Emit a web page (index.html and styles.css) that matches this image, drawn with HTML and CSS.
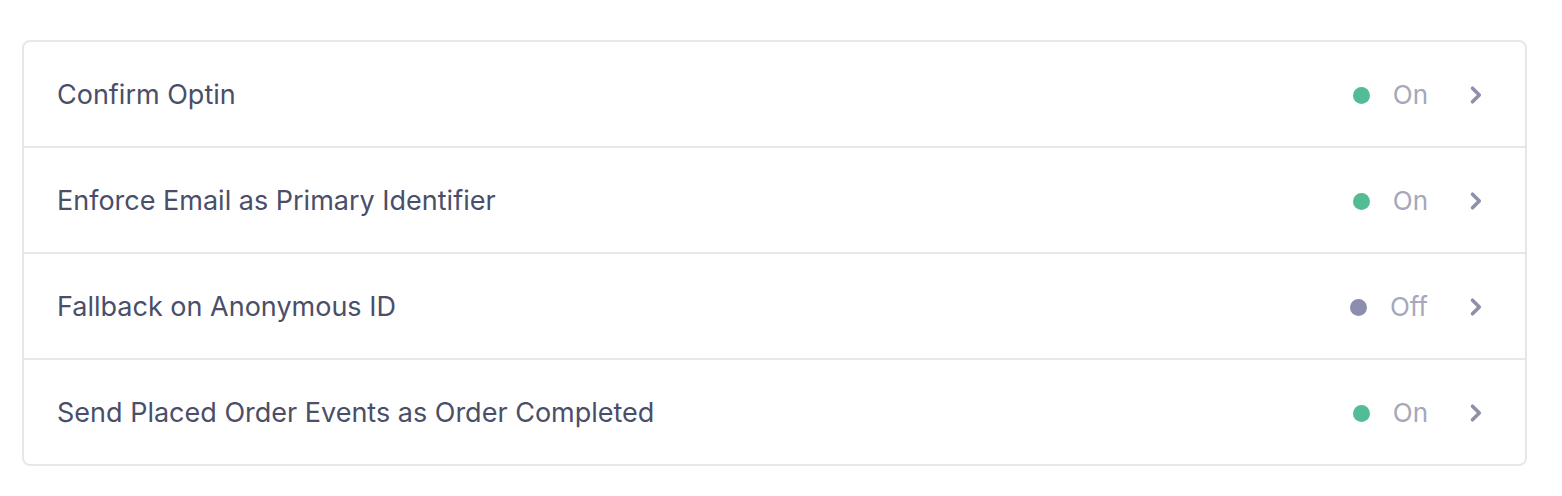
FILE: index.html
```html
<!DOCTYPE html>
<html>
<head>
<meta charset="utf-8">
<link rel="stylesheet" href="styles.css">
</head>
<body>
<div class="card">
  <div class="row">
    <span class="label">Confirm Optin</span>
    <div class="status"><span class="dot on"></span><span class="state">On</span></div>
    <svg class="chev" viewBox="0 0 14 20" width="14" height="20"><path d="M3.5 3.2 L10.3 10 L3.5 16.8" fill="none" stroke="currentColor" stroke-width="3.6" stroke-linecap="round" stroke-linejoin="round"/></svg>
  </div>
  <div class="row">
    <span class="label">Enforce Email as Primary Identifier</span>
    <div class="status"><span class="dot on"></span><span class="state">On</span></div>
    <svg class="chev" viewBox="0 0 14 20" width="14" height="20"><path d="M3.5 3.2 L10.3 10 L3.5 16.8" fill="none" stroke="currentColor" stroke-width="3.6" stroke-linecap="round" stroke-linejoin="round"/></svg>
  </div>
  <div class="row">
    <span class="label">Fallback on Anonymous ID</span>
    <div class="status"><span class="dot off"></span><span class="state">Off</span></div>
    <svg class="chev" viewBox="0 0 14 20" width="14" height="20"><path d="M3.5 3.2 L10.3 10 L3.5 16.8" fill="none" stroke="currentColor" stroke-width="3.6" stroke-linecap="round" stroke-linejoin="round"/></svg>
  </div>
  <div class="row">
    <span class="label">Send Placed Order Events as Order Completed</span>
    <div class="status"><span class="dot on"></span><span class="state">On</span></div>
    <svg class="chev" viewBox="0 0 14 20" width="14" height="20"><path d="M3.5 3.2 L10.3 10 L3.5 16.8" fill="none" stroke="currentColor" stroke-width="3.6" stroke-linecap="round" stroke-linejoin="round"/></svg>
  </div>
</div>
</body>
</html>
```
FILE: styles.css
```css
html, body {
  margin: 0;
  padding: 0;
  background: #ffffff;
}
body {
  padding: 40px 35px 0 22px;
  font-family: Inter, "Noto Sans", sans-serif;
}
.card {
  border: 2px solid #e6e7ea;
  border-radius: 8px;
  display: flex;
  flex-direction: column;
}
.row {
  display: flex;
  align-items: center;
  padding: 1px 42px 0 33px;
  box-sizing: border-box;
  height: 106px;
  border-top: 2px solid #e6e7ea;
}
.row:first-child {
  border-top: none;
  height: 104px;
}
.label {
  flex: 1;
  font-size: 27px;
  color: #4b4e68;
}
.status {
  display: flex;
  align-items: center;
  gap: 23px;
}
.dot {
  width: 17px;
  height: 17px;
  border-radius: 50%;
  margin-top: 2px;
}
.dot.on { background: #52bd94; }
.dot.off { background: #8b8fad; }
.state {
  font-size: 26px;
  color: #a5a7ba;
}
.chev {
  margin-left: 41px;
  color: #8f91ab;
}
```
